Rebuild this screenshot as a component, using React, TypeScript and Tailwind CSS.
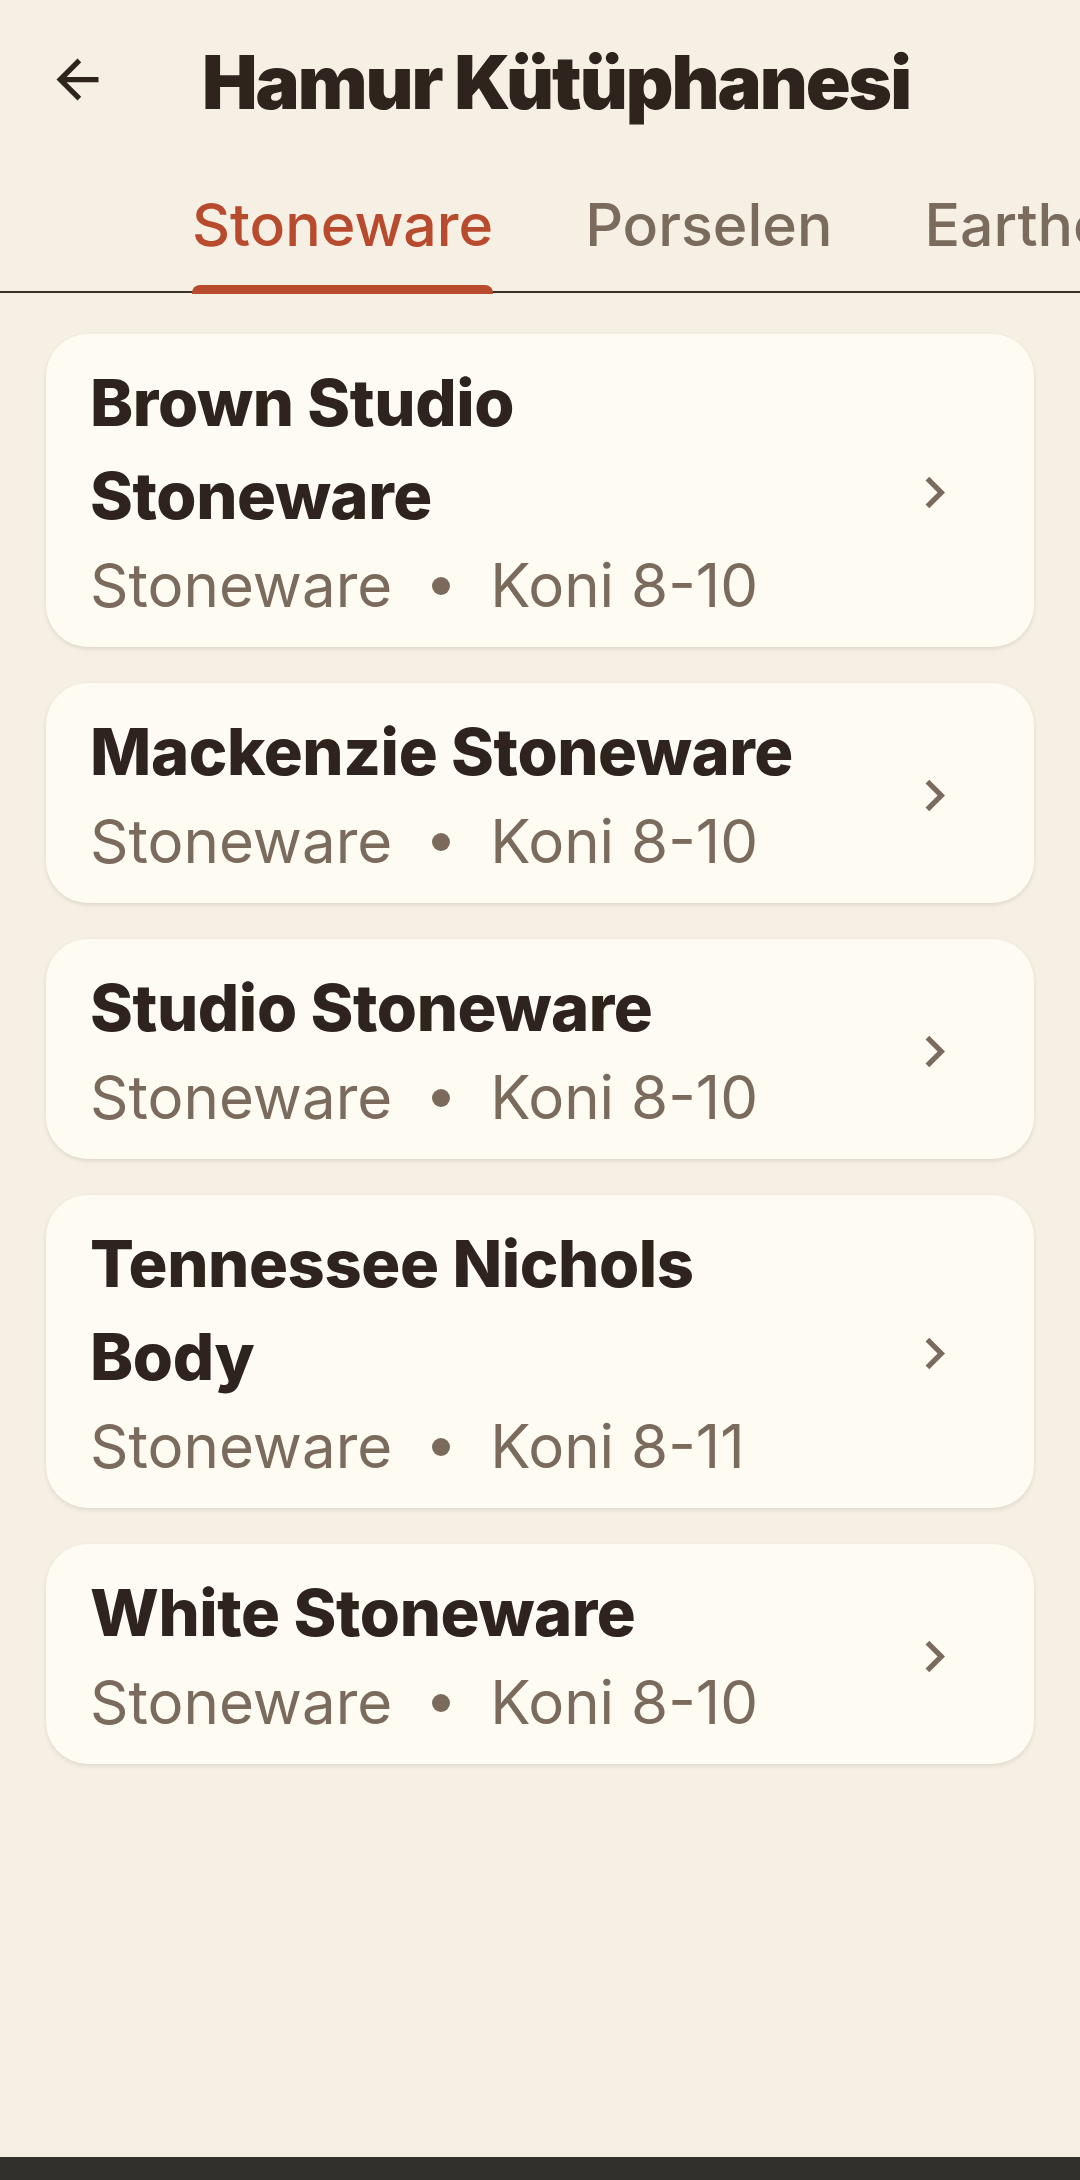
import React from 'react';

type Clay = { name: string; type: string; cone: string };

const clays: Clay[] = [
  { name: 'Brown Studio Stoneware', type: 'Stoneware', cone: 'Koni 8-10' },
  { name: 'Mackenzie Stoneware', type: 'Stoneware', cone: 'Koni 8-10' },
  { name: 'Studio Stoneware', type: 'Stoneware', cone: 'Koni 8-10' },
  { name: 'Tennessee Nichols Body', type: 'Stoneware', cone: 'Koni 8-11' },
  { name: 'White Stoneware', type: 'Stoneware', cone: 'Koni 8-10' },
];

const tabs = ['Stoneware', 'Porselen', 'Earthenware'];

function BackIcon() {
  return (
    <svg viewBox="0 0 24 24" className="w-[63px] h-[63px] text-[#2e241d]" fill="currentColor">
      <path d="M20 11H7.83l5.59-5.59L12 4l-8 8 8 8 1.41-1.41L7.83 13H20v-2z" />
    </svg>
  );
}

function ChevronIcon() {
  return (
    <svg viewBox="0 0 24 24" className="w-[63px] h-[63px] text-[#7a6b5d] shrink-0" fill="currentColor">
      <path d="M10 6L8.59 7.41 13.17 12l-4.58 4.59L10 18l6-6z" />
    </svg>
  );
}

function ClayCard({ clay }: { clay: Clay }) {
  return (
    <div className="flex items-center bg-[#fefbf2] rounded-[42px] shadow-[0_2px_4px_rgba(70,50,30,0.12)] pl-[44px] pr-[68px] pt-[22px] pb-[18px]">
      <div className="flex-1 min-w-0">
        <div className="text-[65px] leading-[93px] font-extrabold tracking-[-0.4px] text-[#2e241d]">{clay.name}</div>
        <div className="flex items-center gap-[40px] text-[60px] leading-[87px] text-[#7a6b5d]">
          <span>{clay.type}</span>
          <span className="w-[18px] h-[18px] rounded-full bg-[#7a6b5d]" />
          <span>{clay.cone}</span>
        </div>
      </div>
      <div className="ml-[80px]">
        <ChevronIcon />
      </div>
    </div>
  );
}

export default function App() {
  return (
    <div className="w-[1080px] h-[2180px] overflow-hidden flex flex-col bg-[#f6efe4] font-['Inter','Noto_Sans',sans-serif]">
      <div className="flex-1">
        {/* top bar */}
        <div className="flex items-start pt-[32px]">
          <button className="ml-[46px] mt-[16px]">
            <BackIcon />
          </button>
          <h1 className="ml-[93px] text-[74px] leading-[100px] font-black text-[#2e241d] tracking-[-2px]">
            Hamur Kütüphanesi
          </h1>
        </div>

        {/* tabs */}
        <div className="mt-[55px] flex pl-[192px] gap-[92px] whitespace-nowrap border-b-[2px] border-[#3a302a]">
          {tabs.map((t, i) => (
            <div key={t} className="flex flex-col">
              <span
                className={
                  i === 0
                    ? 'text-[59px] leading-[75px] font-medium text-[#b84b2e]'
                    : 'text-[59px] leading-[75px] font-medium text-[#7a6b5d]'
                }
              >
                {t}
              </span>
              <div
                className={
                  i === 0
                    ? 'mt-[23px] -mb-[3px] h-[9px] rounded-t-[8px] bg-[#b84b2e] relative'
                    : 'mt-[23px] -mb-[3px] h-[9px]'
                }
              />
            </div>
          ))}
        </div>

        {/* clay list */}
        <div className="flex flex-col gap-[36px] px-[46px] pt-[41px]">
          {clays.map((c) => (
            <ClayCard key={c.name} clay={c} />
          ))}
        </div>
      </div>
      <div className="h-[23px] bg-[#31302d]" />
    </div>
  );
}
